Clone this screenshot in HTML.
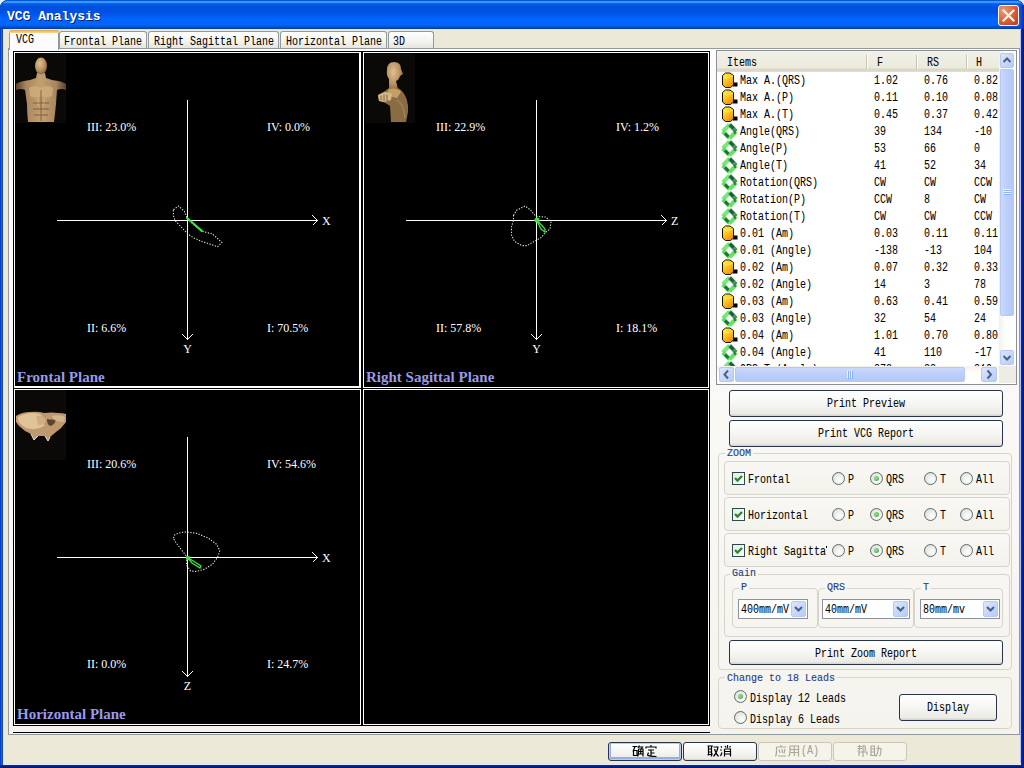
<!DOCTYPE html><html><head><meta charset="utf-8"><title>VCG Analysis</title><style>
*{box-sizing:border-box}
body{margin:0;width:1024px;height:768px;position:relative;overflow:hidden;background:#ECE9D8;font-family:"Liberation Sans",sans-serif}
.a{position:absolute}
.ss{position:absolute;font:11.5px/12px "Liberation Mono",monospace;white-space:pre;color:#000;transform:scale(0.8696,1.1);transform-origin:0 0;-webkit-text-stroke:0.05px #000;margin-top:-2px}
.tab{position:absolute;top:31px;height:17px;border:1px solid #919B9C;border-bottom:none;border-radius:3px 3px 0 0;background:linear-gradient(#FFFFFF,#F3F3EF 60%,#E6E5DD)}
.btn{position:absolute;border:1px solid #27344A;border-radius:3px;background:linear-gradient(#FFFFFF,#F6F6F3 50%,#ECEBE6 90%,#D6D0C5)}
.gb{position:absolute;border:1px solid #D6D5CA;border-radius:4px}
.lbl{position:absolute;font:11.5px/12px "Liberation Mono",monospace;white-space:pre;color:#0046D5;transform:scaleX(0.8696);transform-origin:0 0;-webkit-text-stroke:0.15px #1E4596;margin-top:-2px}
.chk{position:absolute;width:13px;height:13px;border:1px solid #2E4A50;background:linear-gradient(135deg,#E4EEE0,#F8FFF8)}
.rad{position:absolute;width:13px;height:13px;border:1px solid #5E6C70;border-radius:50%;background:radial-gradient(circle at 65% 65%,#FFFFFF,#E8E8E2 60%,#D0D0C8)}
.combo{position:absolute;height:20px;border:1px solid #8A939C;background:#fff}
.sbtn{position:absolute;border:1px solid #B5C9F2;border-radius:2px;background:linear-gradient(135deg,#DCE6FD,#B6CBF7)}
</style></head><body>
<div class="a" style="left:0;top:0;width:1024px;height:29px;background:linear-gradient(#0058D8 0px,#0058D8 1px,#3D95FF 1px,#3D95FF 3px,#0A6AF0 3px,#0058E6 5px,#0050E0 7px,#0052E4 13px,#0066FF 19px,#0066FF 25px,#0050D0 27px,#003C9C 29px)"></div>
<div class="a" style="left:0;top:29px;width:3px;height:739px;background:linear-gradient(90deg,#0040C8 0,#0040C8 1px,#2060D8 1px,#2060D8 2px,#1848A0 2px)"></div>
<div class="a" style="left:3px;top:29px;width:1px;height:735px;background:#D8E8F8"></div>
<div class="a" style="left:1020px;top:29px;width:1px;height:736px;background:#B0C0FF"></div>
<div class="a" style="left:1021px;top:29px;width:3px;height:739px;background:linear-gradient(90deg,#1A2A90,#001488)"></div>
<div class="a" style="left:3px;top:763px;width:1018px;height:2px;background:linear-gradient(#DCE6F4,#E0EEFF)"></div><div class="a" style="left:0;top:765px;width:1024px;height:3px;background:linear-gradient(#1A2A78,#001480)"></div>
<div class="a" style="left:3px;top:29px;width:1018px;height:1px;background:#D8E8F8"></div>
<svg class="a" style="left:0;top:0" width="1024" height="8"><path d="M0 0H6L5 1L3 2L2 3L1 5L0 6Z" fill="#D8F0F8"/><path d="M1024 0H1018L1019 1L1021 2L1022 3L1023 5L1024 6Z" fill="#D8E8F8"/><path d="M6 0.5L3 2L1.5 3.5L0.5 6" stroke="#1040A0" stroke-width="1" fill="none"/><path d="M1018 0.5L1021 2L1022.5 3.5L1023.5 6" stroke="#1040A0" stroke-width="1" fill="none"/></svg>
<div class="a" style="left:8px;top:11px;font:bold 13px/13px 'Liberation Mono',monospace;color:#0A1E6E;white-space:pre">VCG Analysis</div>
<div class="a" style="left:7px;top:10px;font:bold 13px/13px 'Liberation Mono',monospace;color:#FFFFFF;white-space:pre">VCG Analysis</div>
<div class="a" style="left:998px;top:5px;width:21px;height:21px;border:1px solid #FFFFFF;border-radius:3px;background:radial-gradient(circle at 25% 25%,#F09878,#E0603C 50%,#B83818)"></div>
<svg class="a" style="left:998px;top:5px" width="21" height="21"><path d="M5.5 5.5L15.5 15.5M15.5 5.5L5.5 15.5" stroke="#FFF2E4" stroke-width="2.2" stroke-linecap="square"/></svg>
<div class="a" style="left:1020px;top:5px;width:4px;height:24px;background:linear-gradient(90deg,#1A50D0,#0A2AA8)"></div>
<div class="a" style="left:8px;top:48px;width:1012px;height:687px;border:1px solid #919B9C;background:linear-gradient(#FCFCFE,#F8F7F3 70%,#F4F3EE)"></div>
<div class="tab" style="left:59px;width:88px"></div>
<div class="ss" style="left:64px;top:37px">Frontal Plane</div>
<div class="tab" style="left:148px;width:131px"></div>
<div class="ss" style="left:154px;top:37px">Right Sagittal Plane</div>
<div class="tab" style="left:280px;width:107px"></div>
<div class="ss" style="left:286px;top:37px">Horizontal Plane</div>
<div class="tab" style="left:388px;width:46px"></div>
<div class="ss" style="left:393px;top:37px">3D</div>
<div class="a" style="left:9px;top:30px;width:50px;height:20px;border:1px solid #919B9C;border-bottom:none;border-radius:3px 3px 0 0;background:#FCFCFE"></div>
<div class="a" style="left:9px;top:30px;width:50px;height:3px;border-radius:3px 3px 0 0;background:linear-gradient(#E8A848,#F8D890)"></div>
<div class="ss" style="left:16px;top:35px">VCG</div>
<svg class="a" style="left:0;top:0" width="1024" height="768" viewBox="0 0 1024 768"><rect x="13" y="51" width="697" height="675" fill="#000"/><rect x="13" y="732" width="697" height="1" fill="#000"/><rect x="13" y="726" width="697" height="6" fill="#F4F3EE"/><rect x="14" y="52" width="347" height="1" fill="#fff"/><rect x="14" y="52" width="1" height="336" fill="#fff"/><rect x="359" y="52" width="2" height="336" fill="#fff"/><rect x="14" y="386" width="347" height="2" fill="#fff"/><rect x="363" y="52" width="346" height="1" fill="#fff"/><rect x="363" y="52" width="1" height="336" fill="#fff"/><rect x="708" y="52" width="1" height="336" fill="#fff"/><rect x="363" y="387" width="346" height="1" fill="#fff"/><rect x="14" y="389" width="347" height="1" fill="#fff"/><rect x="14" y="389" width="1" height="336" fill="#fff"/><rect x="360" y="389" width="1" height="336" fill="#fff"/><rect x="14" y="724" width="347" height="1" fill="#fff"/><rect x="363" y="389" width="346" height="1" fill="#fff"/><rect x="363" y="389" width="1" height="336" fill="#fff"/><rect x="708" y="389" width="1" height="336" fill="#fff"/><rect x="363" y="724" width="346" height="1" fill="#fff"/><line x1="187.5" y1="100" x2="187.5" y2="340" stroke="#fff" stroke-width="1"/><line x1="57" y1="220.5" x2="318" y2="220.5" stroke="#fff" stroke-width="1"/><path d="M312 215L317 220L312 225" transform="translate(0.5,0.5)" fill="none" stroke="#fff" stroke-width="1.1" shape-rendering="crispEdges"/><path d="M182 334L187 339L192 334" transform="translate(0.5,0.5)" fill="none" stroke="#fff" stroke-width="1.1" shape-rendering="crispEdges"/><text x="322" y="225" font-family="Liberation Serif" font-size="12" fill="#fff">X</text><text x="187.5" y="353" text-anchor="middle" font-family="Liberation Serif" font-size="12" fill="#fff">Y</text><line x1="536.5" y1="100" x2="536.5" y2="340" stroke="#fff" stroke-width="1"/><line x1="406" y1="220.5" x2="667" y2="220.5" stroke="#fff" stroke-width="1"/><path d="M661 215L666 220L661 225" transform="translate(0.5,0.5)" fill="none" stroke="#fff" stroke-width="1.1" shape-rendering="crispEdges"/><path d="M531 334L536 339L541 334" transform="translate(0.5,0.5)" fill="none" stroke="#fff" stroke-width="1.1" shape-rendering="crispEdges"/><text x="671" y="225" font-family="Liberation Serif" font-size="12" fill="#fff">Z</text><text x="536.5" y="353" text-anchor="middle" font-family="Liberation Serif" font-size="12" fill="#fff">Y</text><line x1="187.5" y1="437" x2="187.5" y2="677" stroke="#fff" stroke-width="1"/><line x1="57" y1="557.5" x2="318" y2="557.5" stroke="#fff" stroke-width="1"/><path d="M312 552L317 557L312 562" transform="translate(0.5,0.5)" fill="none" stroke="#fff" stroke-width="1.1" shape-rendering="crispEdges"/><path d="M182 671L187 676L192 671" transform="translate(0.5,0.5)" fill="none" stroke="#fff" stroke-width="1.1" shape-rendering="crispEdges"/><text x="322" y="562" font-family="Liberation Serif" font-size="12" fill="#fff">X</text><text x="187.5" y="690" text-anchor="middle" font-family="Liberation Serif" font-size="12" fill="#fff">Z</text><text x="87" y="131" font-family="Liberation Serif" font-size="12" fill="#fff">III: 23.0%</text><text x="267" y="131" font-family="Liberation Serif" font-size="12" fill="#fff">IV: 0.0%</text><text x="87" y="332" font-family="Liberation Serif" font-size="12" fill="#fff">II: 6.6%</text><text x="267" y="332" font-family="Liberation Serif" font-size="12" fill="#fff">I: 70.5%</text><text x="436" y="131" font-family="Liberation Serif" font-size="12" fill="#fff">III: 22.9%</text><text x="616" y="131" font-family="Liberation Serif" font-size="12" fill="#fff">IV: 1.2%</text><text x="436" y="332" font-family="Liberation Serif" font-size="12" fill="#fff">II: 57.8%</text><text x="616" y="332" font-family="Liberation Serif" font-size="12" fill="#fff">I: 18.1%</text><text x="87" y="468" font-family="Liberation Serif" font-size="12" fill="#fff">III: 20.6%</text><text x="267" y="468" font-family="Liberation Serif" font-size="12" fill="#fff">IV: 54.6%</text><text x="87" y="668" font-family="Liberation Serif" font-size="12" fill="#fff">II: 0.0%</text><text x="267" y="668" font-family="Liberation Serif" font-size="12" fill="#fff">I: 24.7%</text><text x="17" y="382" font-family="Liberation Serif" font-size="15" font-weight="bold" fill="#9A9AE8">Frontal Plane</text><text x="366" y="382" font-family="Liberation Serif" font-size="15" font-weight="bold" fill="#9A9AE8">Right Sagittal Plane</text><text x="17" y="719" font-family="Liberation Serif" font-size="15" font-weight="bold" fill="#9A9AE8">Horizontal Plane</text><polygon points="173.4,209.7 178.6,206.0 184.4,211.3 187.0,218.0 194.0,225.0 201.0,231.0 212.5,234.0 221.9,242.5 217.7,246.7 202.0,241.5 193.8,238.0 187.5,233.6 175.0,220.6 173.4,215.4" fill="none" stroke="#C8F0C0" stroke-width="1.1" stroke-dasharray="1.3 1.5"/><polygon points="513.5,215.4 516.7,210.2 525.0,206.0 530.2,209.7 536.0,216.5 545.8,217.0 551.0,221.7 550.0,229.0 544.8,233.0 541.7,237.3 536.0,240.4 527.0,245.6 521.9,245.6 514.6,241.5 511.5,235.2 511.5,226.9 513.5,220.0" fill="none" stroke="#C8F0C0" stroke-width="1.1" stroke-dasharray="1.3 1.5"/><polygon points="173.4,538.1 175.0,534.5 181.3,532.4 187.0,532.0 196.9,533.4 208.3,538.1 216.7,544.4 219.8,550.6 217.7,557.0 212.5,564.2 204.2,569.4 195.8,571.5 190.6,570.9 186.5,565.2 187.0,557.0 181.3,549.6 175.0,541.3" fill="none" stroke="#C8F0C0" stroke-width="1.1" stroke-dasharray="1.3 1.5"/><line x1="187" y1="218" x2="202" y2="231" stroke="#40E040" stroke-width="2.2" stroke-linecap="round"/><path d="M536 219 L545 229 L545 232 L541 229 Z" fill="none" stroke="#40E040" stroke-width="1.3"/><circle cx="537" cy="220" r="2.5" fill="#40E040"/><path d="M187 557 L201 566 L200 568 L192 563 Z" fill="none" stroke="#40E040" stroke-width="1.3"/><circle cx="188" cy="558" r="2.2" fill="#40E040"/></svg>
<svg class="a" style="left:0;top:0" width="1024" height="768" viewBox="0 0 1024 768"><defs><linearGradient id="sk" x1="0" y1="0" x2="1" y2="1"><stop offset="0" stop-color="#D8B888"/><stop offset="0.5" stop-color="#B08858"/><stop offset="1" stop-color="#7A5A38"/></linearGradient><radialGradient id="sk2" cx="0.4" cy="0.35" r="0.7"><stop offset="0" stop-color="#E0C090"/><stop offset="0.6" stop-color="#B89060"/><stop offset="1" stop-color="#806040"/></radialGradient></defs><rect x="16" y="53" width="50" height="70" fill="#0A0907"/><rect x="365" y="53" width="50" height="70" fill="#0A0907"/><rect x="16" y="390" width="50" height="70" fill="#0A0907"/><defs><linearGradient id="tor" x1="0" y1="0" x2="1" y2="0"><stop offset="0" stop-color="#5A4028"/><stop offset="0.2" stop-color="#A88660"/><stop offset="0.5" stop-color="#C4A070"/><stop offset="0.8" stop-color="#A88660"/><stop offset="1" stop-color="#5A4028"/></linearGradient></defs><path d="M16 84 Q20 81 30 80 L36 78 L37 73 L45 73 L46 78 L52 80 Q62 81 66 84 L66 90 Q61 88 57 90 L56 104 Q55 114 54 122 L28 122 Q27 112 27 104 L25 90 Q21 88 16 90 Z" fill="url(#tor)"/><ellipse cx="41" cy="66" rx="6" ry="8.5" fill="url(#sk2)"/><path d="M29 88 Q35 84 41 88 Q47 84 53 88 L52 96 Q46 99 41 96 Q36 99 30 96 Z" fill="#CFAE7C" opacity="0.8"/><g stroke="#6A4E30" stroke-width="1" fill="none" opacity="0.75"><path d="M41 90 L41 121"/><path d="M33 103 H49 M33 109 H49 M34 115 H48"/></g><path d="M37 98 L39 106 M45 98 L43 106" stroke="#E0C090" stroke-width="1" opacity="0.5"/><path d="M389 88 Q396 85 402 91 Q409 99 408 112 L406 122 L391 122 L390 106 Q386 103 383 102 L379 101 L378 95 L385 91 Z" fill="#8A6C44"/><path d="M387 70 Q387 62 394 62 Q401 62 401 69 L403 74 L400 76 Q399 80 396 81 L398 89 L389 91 L389 79 Q386 75 387 70 Z" fill="url(#sk2)"/><path d="M389 89 Q397 87 401 92 L397 98 Q390 97 387 93 Z" fill="#C4A068"/><path d="M391 90 Q396 89 400 91" stroke="#D0A030" stroke-width="1" fill="none"/><path d="M378 95 L385 92 L392 94 L391 100 L384 102 L379 101 Z" fill="#D4B888"/><path d="M381 95.5 V100.5 M384 94.5 V101 M387 94.5 V101" stroke="#5A4420" stroke-width="0.7"/><path d="M397 100 Q404 104 405 118" stroke="#A88860" stroke-width="2" fill="none" opacity="0.6"/><path d="M16 416 Q22 412 30 412 Q38 411 44 413 Q52 412 58 413 Q63 413 66 414 L66 422 Q62 428 56 432 L50 437 L48 441 L45 436 L38 436 L34 440 L31 434 Q24 431 19 426 L16 422 Z" fill="#C09870"/><path d="M18 417 Q28 411 40 414 Q46 418 44 426 Q36 431 26 428 Q19 424 18 420 Z" fill="#E0C498"/><path d="M36 416 Q42 414 46 420 Q44 426 38 425 Z" fill="#CFAE80"/><path d="M47 419 Q52 420 56 419 Q55 425 50 426 Q47 424 47 421 Z" fill="#3A2818" opacity="0.75"/><path d="M52 416 Q60 414 65 417 L64 422 Q58 422 54 420 Z" fill="#D8BC90" opacity="0.8"/><path d="M31 434 L34 440 L38 436 M45 436 L48 441 L50 437" stroke="#F0E0C0" stroke-width="1" fill="none"/></svg>
<div class="a" style="left:716px;top:50px;width:301px;height:335px;border:1px solid #8D9091;background:#FFFFFF"></div>
<div class="a" style="left:717px;top:51px;width:282px;height:21px;background:linear-gradient(#F2F1EA,#EBEADB 80%,#D8D6C8 88%,#E2DED0)"></div>
<div class="ss" style="left:727px;top:58px">Items</div>
<div class="a" style="left:866px;top:55px;width:1px;height:14px;background:#C7C5B2"></div><div class="a" style="left:867px;top:55px;width:1px;height:14px;background:#FFFFFF"></div>
<div class="a" style="left:916px;top:55px;width:1px;height:14px;background:#C7C5B2"></div><div class="a" style="left:917px;top:55px;width:1px;height:14px;background:#FFFFFF"></div>
<div class="a" style="left:966px;top:55px;width:1px;height:14px;background:#C7C5B2"></div><div class="a" style="left:967px;top:55px;width:1px;height:14px;background:#FFFFFF"></div>
<div class="ss" style="left:877px;top:58px">F</div><div class="ss" style="left:927px;top:58px">RS</div><div class="ss" style="left:976px;top:58px">H</div>
<svg class="a" style="left:721px;top:72px" width="18" height="17"><defs><linearGradient id="cg" x1="0" y1="0" x2="0.6" y2="1"><stop offset="0" stop-color="#FFF448"/><stop offset="0.45" stop-color="#FFD020"/><stop offset="1" stop-color="#F09010"/></linearGradient></defs><rect x="12" y="10.5" width="4.5" height="4" fill="#000"/><path d="M1.5 3.5 L4.5 1 L9 1 L12.5 3.5 L12.5 13 L9.5 15.5 L4.5 15.5 L1.5 13 Z" fill="url(#cg)" stroke="#1A1000" stroke-width="1"/><path d="M2.5 4 L6 6 L12 4" stroke="#FFF8A0" stroke-width="0.8" fill="none" opacity="0.7"/></svg><div class="ss" style="left:740px;top:76px">Max A.(QRS)</div><div class="ss" style="left:874px;top:76px">1.02</div><div class="ss" style="left:924px;top:76px">0.76</div><div class="ss" style="left:974px;top:76px">0.82</div>
<svg class="a" style="left:721px;top:89px" width="18" height="17"><defs><linearGradient id="cg" x1="0" y1="0" x2="0.6" y2="1"><stop offset="0" stop-color="#FFF448"/><stop offset="0.45" stop-color="#FFD020"/><stop offset="1" stop-color="#F09010"/></linearGradient></defs><rect x="12" y="10.5" width="4.5" height="4" fill="#000"/><path d="M1.5 3.5 L4.5 1 L9 1 L12.5 3.5 L12.5 13 L9.5 15.5 L4.5 15.5 L1.5 13 Z" fill="url(#cg)" stroke="#1A1000" stroke-width="1"/><path d="M2.5 4 L6 6 L12 4" stroke="#FFF8A0" stroke-width="0.8" fill="none" opacity="0.7"/></svg><div class="ss" style="left:740px;top:93px">Max A.(P)</div><div class="ss" style="left:874px;top:93px">0.11</div><div class="ss" style="left:924px;top:93px">0.10</div><div class="ss" style="left:974px;top:93px">0.08</div>
<svg class="a" style="left:721px;top:106px" width="18" height="17"><defs><linearGradient id="cg" x1="0" y1="0" x2="0.6" y2="1"><stop offset="0" stop-color="#FFF448"/><stop offset="0.45" stop-color="#FFD020"/><stop offset="1" stop-color="#F09010"/></linearGradient></defs><rect x="12" y="10.5" width="4.5" height="4" fill="#000"/><path d="M1.5 3.5 L4.5 1 L9 1 L12.5 3.5 L12.5 13 L9.5 15.5 L4.5 15.5 L1.5 13 Z" fill="url(#cg)" stroke="#1A1000" stroke-width="1"/><path d="M2.5 4 L6 6 L12 4" stroke="#FFF8A0" stroke-width="0.8" fill="none" opacity="0.7"/></svg><div class="ss" style="left:740px;top:110px">Max A.(T)</div><div class="ss" style="left:874px;top:110px">0.45</div><div class="ss" style="left:924px;top:110px">0.37</div><div class="ss" style="left:974px;top:110px">0.42</div>
<svg class="a" style="left:721px;top:123px" width="17" height="17"><circle cx="8.5" cy="8.5" r="4" fill="#F0FFF0"/><g stroke-width="4" stroke-linecap="butt" fill="none"><path d="M8.5 1.5 L1.8 8.5" stroke="#78E878"/><path d="M1.8 8.5 L8.5 15.3" stroke="#60DC60"/><path d="M8.5 15.3 L15.2 8.5" stroke="#68E068"/><path d="M15.2 8.5 L8.5 1.5" stroke="#4A9A60"/></g><path d="M4 10.5 L7.5 14" stroke="#2A6A40" stroke-width="3"/><path d="M9 2 L12.5 5.5" stroke="#245A40" stroke-width="3"/><path d="M13.5 7 L14 11" stroke="#3A7A50" stroke-width="2"/></svg><div class="ss" style="left:740px;top:127px">Angle(QRS)</div><div class="ss" style="left:874px;top:127px">39</div><div class="ss" style="left:924px;top:127px">134</div><div class="ss" style="left:974px;top:127px">-10</div>
<svg class="a" style="left:721px;top:140px" width="17" height="17"><circle cx="8.5" cy="8.5" r="4" fill="#F0FFF0"/><g stroke-width="4" stroke-linecap="butt" fill="none"><path d="M8.5 1.5 L1.8 8.5" stroke="#78E878"/><path d="M1.8 8.5 L8.5 15.3" stroke="#60DC60"/><path d="M8.5 15.3 L15.2 8.5" stroke="#68E068"/><path d="M15.2 8.5 L8.5 1.5" stroke="#4A9A60"/></g><path d="M4 10.5 L7.5 14" stroke="#2A6A40" stroke-width="3"/><path d="M9 2 L12.5 5.5" stroke="#245A40" stroke-width="3"/><path d="M13.5 7 L14 11" stroke="#3A7A50" stroke-width="2"/></svg><div class="ss" style="left:740px;top:144px">Angle(P)</div><div class="ss" style="left:874px;top:144px">53</div><div class="ss" style="left:924px;top:144px">66</div><div class="ss" style="left:974px;top:144px">0</div>
<svg class="a" style="left:721px;top:157px" width="17" height="17"><circle cx="8.5" cy="8.5" r="4" fill="#F0FFF0"/><g stroke-width="4" stroke-linecap="butt" fill="none"><path d="M8.5 1.5 L1.8 8.5" stroke="#78E878"/><path d="M1.8 8.5 L8.5 15.3" stroke="#60DC60"/><path d="M8.5 15.3 L15.2 8.5" stroke="#68E068"/><path d="M15.2 8.5 L8.5 1.5" stroke="#4A9A60"/></g><path d="M4 10.5 L7.5 14" stroke="#2A6A40" stroke-width="3"/><path d="M9 2 L12.5 5.5" stroke="#245A40" stroke-width="3"/><path d="M13.5 7 L14 11" stroke="#3A7A50" stroke-width="2"/></svg><div class="ss" style="left:740px;top:161px">Angle(T)</div><div class="ss" style="left:874px;top:161px">41</div><div class="ss" style="left:924px;top:161px">52</div><div class="ss" style="left:974px;top:161px">34</div>
<svg class="a" style="left:721px;top:174px" width="17" height="17"><circle cx="8.5" cy="8.5" r="4" fill="#F0FFF0"/><g stroke-width="4" stroke-linecap="butt" fill="none"><path d="M8.5 1.5 L1.8 8.5" stroke="#78E878"/><path d="M1.8 8.5 L8.5 15.3" stroke="#60DC60"/><path d="M8.5 15.3 L15.2 8.5" stroke="#68E068"/><path d="M15.2 8.5 L8.5 1.5" stroke="#4A9A60"/></g><path d="M4 10.5 L7.5 14" stroke="#2A6A40" stroke-width="3"/><path d="M9 2 L12.5 5.5" stroke="#245A40" stroke-width="3"/><path d="M13.5 7 L14 11" stroke="#3A7A50" stroke-width="2"/></svg><div class="ss" style="left:740px;top:178px">Rotation(QRS)</div><div class="ss" style="left:874px;top:178px">CW</div><div class="ss" style="left:924px;top:178px">CW</div><div class="ss" style="left:974px;top:178px">CCW</div>
<svg class="a" style="left:721px;top:191px" width="17" height="17"><circle cx="8.5" cy="8.5" r="4" fill="#F0FFF0"/><g stroke-width="4" stroke-linecap="butt" fill="none"><path d="M8.5 1.5 L1.8 8.5" stroke="#78E878"/><path d="M1.8 8.5 L8.5 15.3" stroke="#60DC60"/><path d="M8.5 15.3 L15.2 8.5" stroke="#68E068"/><path d="M15.2 8.5 L8.5 1.5" stroke="#4A9A60"/></g><path d="M4 10.5 L7.5 14" stroke="#2A6A40" stroke-width="3"/><path d="M9 2 L12.5 5.5" stroke="#245A40" stroke-width="3"/><path d="M13.5 7 L14 11" stroke="#3A7A50" stroke-width="2"/></svg><div class="ss" style="left:740px;top:195px">Rotation(P)</div><div class="ss" style="left:874px;top:195px">CCW</div><div class="ss" style="left:924px;top:195px">8</div><div class="ss" style="left:974px;top:195px">CW</div>
<svg class="a" style="left:721px;top:208px" width="17" height="17"><circle cx="8.5" cy="8.5" r="4" fill="#F0FFF0"/><g stroke-width="4" stroke-linecap="butt" fill="none"><path d="M8.5 1.5 L1.8 8.5" stroke="#78E878"/><path d="M1.8 8.5 L8.5 15.3" stroke="#60DC60"/><path d="M8.5 15.3 L15.2 8.5" stroke="#68E068"/><path d="M15.2 8.5 L8.5 1.5" stroke="#4A9A60"/></g><path d="M4 10.5 L7.5 14" stroke="#2A6A40" stroke-width="3"/><path d="M9 2 L12.5 5.5" stroke="#245A40" stroke-width="3"/><path d="M13.5 7 L14 11" stroke="#3A7A50" stroke-width="2"/></svg><div class="ss" style="left:740px;top:212px">Rotation(T)</div><div class="ss" style="left:874px;top:212px">CW</div><div class="ss" style="left:924px;top:212px">CW</div><div class="ss" style="left:974px;top:212px">CCW</div>
<svg class="a" style="left:721px;top:225px" width="18" height="17"><defs><linearGradient id="cg" x1="0" y1="0" x2="0.6" y2="1"><stop offset="0" stop-color="#FFF448"/><stop offset="0.45" stop-color="#FFD020"/><stop offset="1" stop-color="#F09010"/></linearGradient></defs><rect x="12" y="10.5" width="4.5" height="4" fill="#000"/><path d="M1.5 3.5 L4.5 1 L9 1 L12.5 3.5 L12.5 13 L9.5 15.5 L4.5 15.5 L1.5 13 Z" fill="url(#cg)" stroke="#1A1000" stroke-width="1"/><path d="M2.5 4 L6 6 L12 4" stroke="#FFF8A0" stroke-width="0.8" fill="none" opacity="0.7"/></svg><div class="ss" style="left:740px;top:229px">0.01 (Am)</div><div class="ss" style="left:874px;top:229px">0.03</div><div class="ss" style="left:924px;top:229px">0.11</div><div class="ss" style="left:974px;top:229px">0.11</div>
<svg class="a" style="left:721px;top:242px" width="17" height="17"><circle cx="8.5" cy="8.5" r="4" fill="#F0FFF0"/><g stroke-width="4" stroke-linecap="butt" fill="none"><path d="M8.5 1.5 L1.8 8.5" stroke="#78E878"/><path d="M1.8 8.5 L8.5 15.3" stroke="#60DC60"/><path d="M8.5 15.3 L15.2 8.5" stroke="#68E068"/><path d="M15.2 8.5 L8.5 1.5" stroke="#4A9A60"/></g><path d="M4 10.5 L7.5 14" stroke="#2A6A40" stroke-width="3"/><path d="M9 2 L12.5 5.5" stroke="#245A40" stroke-width="3"/><path d="M13.5 7 L14 11" stroke="#3A7A50" stroke-width="2"/></svg><div class="ss" style="left:740px;top:246px">0.01 (Angle)</div><div class="ss" style="left:874px;top:246px">-138</div><div class="ss" style="left:924px;top:246px">-13</div><div class="ss" style="left:974px;top:246px">104</div>
<svg class="a" style="left:721px;top:259px" width="18" height="17"><defs><linearGradient id="cg" x1="0" y1="0" x2="0.6" y2="1"><stop offset="0" stop-color="#FFF448"/><stop offset="0.45" stop-color="#FFD020"/><stop offset="1" stop-color="#F09010"/></linearGradient></defs><rect x="12" y="10.5" width="4.5" height="4" fill="#000"/><path d="M1.5 3.5 L4.5 1 L9 1 L12.5 3.5 L12.5 13 L9.5 15.5 L4.5 15.5 L1.5 13 Z" fill="url(#cg)" stroke="#1A1000" stroke-width="1"/><path d="M2.5 4 L6 6 L12 4" stroke="#FFF8A0" stroke-width="0.8" fill="none" opacity="0.7"/></svg><div class="ss" style="left:740px;top:263px">0.02 (Am)</div><div class="ss" style="left:874px;top:263px">0.07</div><div class="ss" style="left:924px;top:263px">0.32</div><div class="ss" style="left:974px;top:263px">0.33</div>
<svg class="a" style="left:721px;top:276px" width="17" height="17"><circle cx="8.5" cy="8.5" r="4" fill="#F0FFF0"/><g stroke-width="4" stroke-linecap="butt" fill="none"><path d="M8.5 1.5 L1.8 8.5" stroke="#78E878"/><path d="M1.8 8.5 L8.5 15.3" stroke="#60DC60"/><path d="M8.5 15.3 L15.2 8.5" stroke="#68E068"/><path d="M15.2 8.5 L8.5 1.5" stroke="#4A9A60"/></g><path d="M4 10.5 L7.5 14" stroke="#2A6A40" stroke-width="3"/><path d="M9 2 L12.5 5.5" stroke="#245A40" stroke-width="3"/><path d="M13.5 7 L14 11" stroke="#3A7A50" stroke-width="2"/></svg><div class="ss" style="left:740px;top:280px">0.02 (Angle)</div><div class="ss" style="left:874px;top:280px">14</div><div class="ss" style="left:924px;top:280px">3</div><div class="ss" style="left:974px;top:280px">78</div>
<svg class="a" style="left:721px;top:293px" width="18" height="17"><defs><linearGradient id="cg" x1="0" y1="0" x2="0.6" y2="1"><stop offset="0" stop-color="#FFF448"/><stop offset="0.45" stop-color="#FFD020"/><stop offset="1" stop-color="#F09010"/></linearGradient></defs><rect x="12" y="10.5" width="4.5" height="4" fill="#000"/><path d="M1.5 3.5 L4.5 1 L9 1 L12.5 3.5 L12.5 13 L9.5 15.5 L4.5 15.5 L1.5 13 Z" fill="url(#cg)" stroke="#1A1000" stroke-width="1"/><path d="M2.5 4 L6 6 L12 4" stroke="#FFF8A0" stroke-width="0.8" fill="none" opacity="0.7"/></svg><div class="ss" style="left:740px;top:297px">0.03 (Am)</div><div class="ss" style="left:874px;top:297px">0.63</div><div class="ss" style="left:924px;top:297px">0.41</div><div class="ss" style="left:974px;top:297px">0.59</div>
<svg class="a" style="left:721px;top:310px" width="17" height="17"><circle cx="8.5" cy="8.5" r="4" fill="#F0FFF0"/><g stroke-width="4" stroke-linecap="butt" fill="none"><path d="M8.5 1.5 L1.8 8.5" stroke="#78E878"/><path d="M1.8 8.5 L8.5 15.3" stroke="#60DC60"/><path d="M8.5 15.3 L15.2 8.5" stroke="#68E068"/><path d="M15.2 8.5 L8.5 1.5" stroke="#4A9A60"/></g><path d="M4 10.5 L7.5 14" stroke="#2A6A40" stroke-width="3"/><path d="M9 2 L12.5 5.5" stroke="#245A40" stroke-width="3"/><path d="M13.5 7 L14 11" stroke="#3A7A50" stroke-width="2"/></svg><div class="ss" style="left:740px;top:314px">0.03 (Angle)</div><div class="ss" style="left:874px;top:314px">32</div><div class="ss" style="left:924px;top:314px">54</div><div class="ss" style="left:974px;top:314px">24</div>
<svg class="a" style="left:721px;top:327px" width="18" height="17"><defs><linearGradient id="cg" x1="0" y1="0" x2="0.6" y2="1"><stop offset="0" stop-color="#FFF448"/><stop offset="0.45" stop-color="#FFD020"/><stop offset="1" stop-color="#F09010"/></linearGradient></defs><rect x="12" y="10.5" width="4.5" height="4" fill="#000"/><path d="M1.5 3.5 L4.5 1 L9 1 L12.5 3.5 L12.5 13 L9.5 15.5 L4.5 15.5 L1.5 13 Z" fill="url(#cg)" stroke="#1A1000" stroke-width="1"/><path d="M2.5 4 L6 6 L12 4" stroke="#FFF8A0" stroke-width="0.8" fill="none" opacity="0.7"/></svg><div class="ss" style="left:740px;top:331px">0.04 (Am)</div><div class="ss" style="left:874px;top:331px">1.01</div><div class="ss" style="left:924px;top:331px">0.70</div><div class="ss" style="left:974px;top:331px">0.80</div>
<svg class="a" style="left:721px;top:344px" width="17" height="17"><circle cx="8.5" cy="8.5" r="4" fill="#F0FFF0"/><g stroke-width="4" stroke-linecap="butt" fill="none"><path d="M8.5 1.5 L1.8 8.5" stroke="#78E878"/><path d="M1.8 8.5 L8.5 15.3" stroke="#60DC60"/><path d="M8.5 15.3 L15.2 8.5" stroke="#68E068"/><path d="M15.2 8.5 L8.5 1.5" stroke="#4A9A60"/></g><path d="M4 10.5 L7.5 14" stroke="#2A6A40" stroke-width="3"/><path d="M9 2 L12.5 5.5" stroke="#245A40" stroke-width="3"/><path d="M13.5 7 L14 11" stroke="#3A7A50" stroke-width="2"/></svg><div class="ss" style="left:740px;top:348px">0.04 (Angle)</div><div class="ss" style="left:874px;top:348px">41</div><div class="ss" style="left:924px;top:348px">110</div><div class="ss" style="left:974px;top:348px">-17</div>
<svg class="a" style="left:721px;top:361px" width="17" height="17"><circle cx="8.5" cy="8.5" r="4" fill="#F0FFF0"/><g stroke-width="4" stroke-linecap="butt" fill="none"><path d="M8.5 1.5 L1.8 8.5" stroke="#78E878"/><path d="M1.8 8.5 L8.5 15.3" stroke="#60DC60"/><path d="M8.5 15.3 L15.2 8.5" stroke="#68E068"/><path d="M15.2 8.5 L8.5 1.5" stroke="#4A9A60"/></g><path d="M4 10.5 L7.5 14" stroke="#2A6A40" stroke-width="3"/><path d="M9 2 L12.5 5.5" stroke="#245A40" stroke-width="3"/><path d="M13.5 7 L14 11" stroke="#3A7A50" stroke-width="2"/></svg><div class="ss" style="left:740px;top:365px">QRS-T (Angle)</div><div class="ss" style="left:874px;top:365px">373</div><div class="ss" style="left:924px;top:365px">33</div><div class="ss" style="left:974px;top:365px">310</div>
<div class="a" style="left:999px;top:51px;width:17px;height:315px;background:linear-gradient(90deg,#F3F1EC,#FEFEFB 40%,#FFFFFF)"></div>
<div class="sbtn" style="left:1000px;top:53px;width:14px;height:15px"></div>
<svg class="a" style="left:1000px;top:53px" width="14" height="15"><path d="M3.5 9 L7 5.5 L10.5 9" stroke="#4D6185" stroke-width="2" fill="none"/></svg>
<div class="sbtn" style="left:1000px;top:69px;width:14px;height:247px;background:linear-gradient(90deg,#C9D8FC,#BCCFF9 50%,#B4C8F6)"></div>
<svg class="a" style="left:1003px;top:188px" width="8" height="8"><path d="M0 1.5H8M0 3.5H8M0 5.5H8" stroke="#EEF4FE" stroke-width="1"/><path d="M1 2.5H8M1 4.5H8M1 6.5H8" stroke="#8CB0F8" stroke-width="1"/></svg>
<div class="sbtn" style="left:1000px;top:350px;width:14px;height:15px"></div>
<svg class="a" style="left:1000px;top:350px" width="14" height="15"><path d="M3.5 6 L7 9.5 L10.5 6" stroke="#4D6185" stroke-width="2" fill="none"/></svg>
<div class="a" style="left:717px;top:366px;width:282px;height:17px;background:linear-gradient(#F3F1EC,#FEFEFB 40%,#FFFFFF)"></div>
<div class="sbtn" style="left:719px;top:367px;width:15px;height:15px"></div>
<svg class="a" style="left:719px;top:367px" width="15" height="15"><path d="M9 3.5 L5.5 7.5 L9 11.5" stroke="#4D6185" stroke-width="2" fill="none"/></svg>
<div class="sbtn" style="left:735px;top:367px;width:230px;height:15px;background:linear-gradient(#C9D8FC,#BCCFF9 50%,#B4C8F6)"></div>
<svg class="a" style="left:846px;top:370px" width="8" height="9"><path d="M1.5 0V8M3.5 0V8M5.5 0V8" stroke="#EEF4FE" stroke-width="1"/><path d="M2.5 1V9M4.5 1V9M6.5 1V9" stroke="#8CB0F8" stroke-width="1"/></svg>
<div class="sbtn" style="left:981px;top:367px;width:16px;height:15px"></div>
<svg class="a" style="left:981px;top:367px" width="16" height="15"><path d="M6.5 3.5 L10 7.5 L6.5 11.5" stroke="#4D6185" stroke-width="2" fill="none"/></svg>
<div class="a" style="left:999px;top:366px;width:17px;height:17px;background:#EEEDE5"></div>
<div class="btn" style="left:729px;top:390px;width:274px;height:27px;"></div>
<div class="ss" style="left:827.0px;top:399px">Print Preview</div>
<div class="btn" style="left:729px;top:420px;width:274px;height:27px;"></div>
<div class="ss" style="left:818.0px;top:429px">Print VCG Report</div>
<div class="btn" style="left:729px;top:640px;width:274px;height:25px;"></div>
<div class="ss" style="left:815.0px;top:649px">Print Zoom Report</div>
<div class="btn" style="left:899px;top:694px;width:98px;height:27px;"></div>
<div class="ss" style="left:927.0px;top:703px">Display</div>
<div class="gb" style="left:718px;top:453px;width:294px;height:217px;"></div>
<div class="a" style="left:725px;top:452px;width:28px;height:3px;background:#F7F6F2"></div>
<div class="lbl" style="left:727px;top:449px;color:#1F3F80">ZOOM</div>
<div class="gb" style="left:724px;top:461px;width:286px;height:34px;background:linear-gradient(#F9F8F4,#F3F2EC)"></div>
<div class="chk" style="left:732px;top:472px"></div>
<svg class="a" style="left:732px;top:472px" width="13" height="13"><path d="M3 6 L5.5 8.5 L10 4" stroke="#3A7E3A" stroke-width="2.4" fill="none"/></svg>
<div class="ss" style="left:748px;top:475px">Frontal</div>
<div class="rad" style="left:832px;top:472px"></div>
<div class="ss" style="left:848px;top:475px">P</div>
<div class="rad" style="left:870px;top:472px"></div>
<div class="a" style="left:874px;top:476px;width:5px;height:5px;border-radius:50%;background:radial-gradient(circle at 40% 40%,#A0E0A0,#30A030)"></div>
<div class="ss" style="left:886px;top:475px">QRS</div>
<div class="rad" style="left:924px;top:472px"></div>
<div class="ss" style="left:940px;top:475px">T</div>
<div class="rad" style="left:960px;top:472px"></div>
<div class="ss" style="left:976px;top:475px">All</div>
<div class="gb" style="left:724px;top:497px;width:286px;height:34px;background:linear-gradient(#F9F8F4,#F3F2EC)"></div>
<div class="chk" style="left:732px;top:508px"></div>
<svg class="a" style="left:732px;top:508px" width="13" height="13"><path d="M3 6 L5.5 8.5 L10 4" stroke="#3A7E3A" stroke-width="2.4" fill="none"/></svg>
<div class="ss" style="left:748px;top:511px">Horizontal</div>
<div class="rad" style="left:832px;top:508px"></div>
<div class="ss" style="left:848px;top:511px">P</div>
<div class="rad" style="left:870px;top:508px"></div>
<div class="a" style="left:874px;top:512px;width:5px;height:5px;border-radius:50%;background:radial-gradient(circle at 40% 40%,#A0E0A0,#30A030)"></div>
<div class="ss" style="left:886px;top:511px">QRS</div>
<div class="rad" style="left:924px;top:508px"></div>
<div class="ss" style="left:940px;top:511px">T</div>
<div class="rad" style="left:960px;top:508px"></div>
<div class="ss" style="left:976px;top:511px">All</div>
<div class="gb" style="left:724px;top:533px;width:286px;height:34px;background:linear-gradient(#F9F8F4,#F3F2EC)"></div>
<div class="chk" style="left:732px;top:544px"></div>
<svg class="a" style="left:732px;top:544px" width="13" height="13"><path d="M3 6 L5.5 8.5 L10 4" stroke="#3A7E3A" stroke-width="2.4" fill="none"/></svg>
<div class="ss" style="left:748px;top:547px">Right Sagitta</div>
<div class="a" style="left:826px;top:546px;width:3px;height:9px;background:#F6F5F0"></div>
<div class="a" style="left:826px;top:546px;width:1px;height:2px;background:#000"></div>
<div class="rad" style="left:832px;top:544px"></div>
<div class="ss" style="left:848px;top:547px">P</div>
<div class="rad" style="left:870px;top:544px"></div>
<div class="a" style="left:874px;top:548px;width:5px;height:5px;border-radius:50%;background:radial-gradient(circle at 40% 40%,#A0E0A0,#30A030)"></div>
<div class="ss" style="left:886px;top:547px">QRS</div>
<div class="rad" style="left:924px;top:544px"></div>
<div class="ss" style="left:940px;top:547px">T</div>
<div class="rad" style="left:960px;top:544px"></div>
<div class="ss" style="left:976px;top:547px">All</div>
<div class="gb" style="left:724px;top:574px;width:286px;height:63px;"></div>
<div class="a" style="left:730px;top:573px;width:28px;height:3px;background:#F7F6F2"></div>
<div class="lbl" style="left:732px;top:569px;color:#1F3F80">Gain</div>
<div class="gb" style="left:732px;top:588px;width:86px;height:40px;"></div>
<div class="a" style="left:739px;top:587px;width:10px;height:3px;background:#F7F6F2"></div>
<div class="lbl" style="left:741px;top:583px;color:#1F3F80">P</div>
<div class="combo" style="left:738px;top:599px;width:70px"></div>
<div class="ss" style="left:741px;top:605px">400mm/mV</div>
<div class="sbtn" style="left:791px;top:601px;width:15px;height:16px"></div>
<svg class="a" style="left:791px;top:601px" width="15" height="16"><path d="M4 6 L7.5 9.5 L11 6" stroke="#4D6185" stroke-width="2.2" fill="none"/></svg>
<div class="gb" style="left:818px;top:588px;width:96px;height:40px;"></div>
<div class="a" style="left:825px;top:587px;width:22px;height:3px;background:#F7F6F2"></div>
<div class="lbl" style="left:827px;top:583px;color:#1F3F80">QRS</div>
<div class="combo" style="left:822px;top:599px;width:88px"></div>
<div class="ss" style="left:825px;top:605px">40mm/mV</div>
<div class="sbtn" style="left:893px;top:601px;width:15px;height:16px"></div>
<svg class="a" style="left:893px;top:601px" width="15" height="16"><path d="M4 6 L7.5 9.5 L11 6" stroke="#4D6185" stroke-width="2.2" fill="none"/></svg>
<div class="gb" style="left:914px;top:588px;width:89px;height:40px;"></div>
<div class="a" style="left:921px;top:587px;width:10px;height:3px;background:#F7F6F2"></div>
<div class="lbl" style="left:923px;top:583px;color:#1F3F80">T</div>
<div class="combo" style="left:920px;top:599px;width:80px"></div>
<div class="ss" style="left:923px;top:605px">80mm/mv</div>
<div class="sbtn" style="left:983px;top:601px;width:15px;height:16px"></div>
<svg class="a" style="left:983px;top:601px" width="15" height="16"><path d="M4 6 L7.5 9.5 L11 6" stroke="#4D6185" stroke-width="2.2" fill="none"/></svg>
<div class="gb" style="left:718px;top:677px;width:294px;height:52px;"></div>
<div class="a" style="left:725px;top:676px;width:112px;height:3px;background:#F7F6F2"></div>
<div class="lbl" style="left:727px;top:674px;color:#1F3F80">Change to 18 Leads</div>
<div class="rad" style="left:734px;top:690px"></div>
<div class="a" style="left:738px;top:694px;width:5px;height:5px;border-radius:50%;background:radial-gradient(circle at 40% 40%,#A0E0A0,#30A030)"></div>
<div class="ss" style="left:750px;top:694px">Display 12 Leads</div>
<div class="rad" style="left:734px;top:711px"></div>
<div class="ss" style="left:750px;top:715px">Display 6 Leads</div>
<div class="btn" style="left:608px;top:742px;width:74px;height:19px;box-shadow:inset 0 0 0 1px #B8CCF8,inset 0 -1px 0 2px #97AEE2"></div>
<svg class="a" style="left:0;top:0" width="1024" height="768"><g fill="none" stroke="#000" stroke-width="1.2"><path transform="translate(632,745)" d="M0.5 1.5H5.5M3 1.5L1 6.5M1.5 5.5H5V10.5H1.5ZM7.5 0.5L6 3M7 2H10.5L9.5 3.5M6.5 4H11V11.5M6.5 4V8Q6.5 10 5.5 11.5M6.5 6.5H11M6.5 9H11M8.75 4V9"/><path transform="translate(645,745)" d="M6 0V2M1 3.5V2H11V3.5M3 5H9M6 5V11M6 8H9.5M3.5 7.5L2.5 10Q4 11.5 11.5 11.5"/></g></svg>
<div class="btn" style="left:683px;top:742px;width:74px;height:19px"></div>
<svg class="a" style="left:0;top:0" width="1024" height="768"><g fill="none" stroke="#000" stroke-width="1.2"><path transform="translate(707,745)" d="M0.5 1H6M1.5 1V10M4.5 1V11.5M1.5 4H4.5M1.5 7H4.5M0.5 10L6 9M6.5 2H11Q10 8 6.5 11.5M7.5 4Q9 9 11.5 11.5"/><path transform="translate(720,745)" d="M0.8 1.5L2 2.5M0.5 4.5L1.5 5.5M0.5 11L2 7.5M7.5 0V3M5 1L6 2.5M10.5 1L9.5 2.5M4.5 4V11.5M4.5 4H10.5V11.5M4.5 6.5H10.5M4.5 9H10.5"/></g></svg>
<div class="btn" style="left:758px;top:742px;width:74px;height:19px;border-color:#C9C7BA;background:#F5F4EA"></div>
<svg class="a" style="left:0;top:0" width="1024" height="768"><g fill="none" stroke="#ACA899" stroke-width="1.2"><path transform="translate(775,745)" d="M6 0V1.5M1.5 2H11M1.5 2V7Q1.5 10 0.5 11.5M4 4.5L5 8M7 4L7.5 8M10 4L9 8.5M3 11H11"/><path transform="translate(788,745)" d="M2 1V7Q2 10 0.5 11.5M2 1H10.5V11.5M2 4.5H10.5M2 7.5H10.5M6.25 1V11"/></g></svg>
<div class="ss" style="left:801px;top:746px;color:#ACA899">(A)</div>
<div class="btn" style="left:833px;top:742px;width:74px;height:19px;border-color:#C9C7BA;background:#F5F4EA"></div>
<svg class="a" style="left:0;top:0" width="1024" height="768"><g fill="none" stroke="#ACA899" stroke-width="1.2"><path transform="translate(857,745)" d="M0.5 1.5H5M0.5 3.5H5M2.5 0V5Q2 6 0.5 6.5M6 0.5V6M6 0.5Q9 0.5 8 3Q10 5 7 5.5M2 7V11M2 7H10V10M6 6V12"/><path transform="translate(870,745)" d="M1 1V10M1 1H4.5V10M1 4H4.5M1 7H4.5M0 10.5H6M6.5 3.5H11Q11 11 9 11M8.5 0.5Q8.5 8 5.5 11.5"/></g></svg>
</body></html>
